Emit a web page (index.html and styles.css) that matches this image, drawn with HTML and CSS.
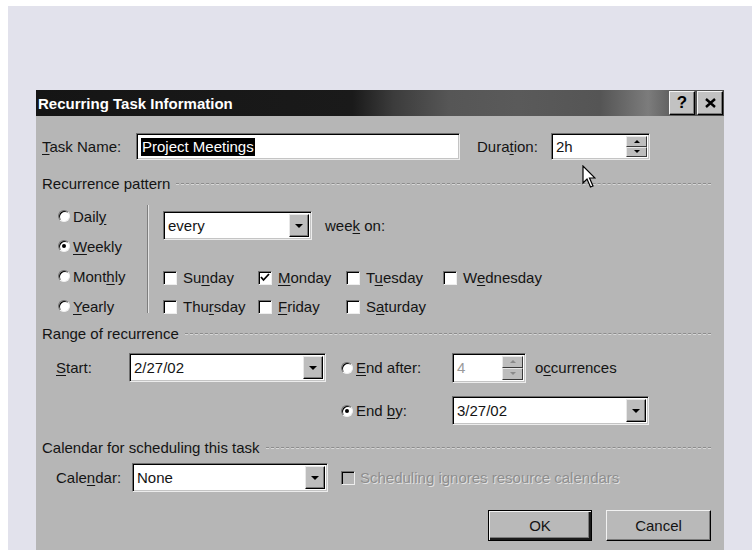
FILE: index.html
```html
<!DOCTYPE html>
<html>
<head>
<meta charset="utf-8">
<title>Recurring Task Information</title>
<link rel="stylesheet" href="styles.css">
</head>
<body>
<div class="desk">
  <div class="dialog">
    <div class="titlebar">
      <span class="title">Recurring Task Information</span>
      <div class="tbtns">
        <span class="tbtn">?</span>
        <span class="tbtn tbtn-x">
          <svg width="11" height="10" viewBox="0 0 11 10"><path d="M1 1 L10 9 M10 1 L1 9" stroke="#000" stroke-width="2.4"/></svg>
        </span>
      </div>
    </div>

    <div class="dbody">
      <!-- task name / duration -->
      <div class="row row-task">
        <span class="lbl lbl-task"><u>T</u>ask Name:</span>
        <div class="field f-task"><span class="txt"><span class="sel">Project Meetings</span></span></div>
        <span class="lbl lbl-dur">Dura<u>t</u>ion:</span>
        <div class="field f-dur">
          <span class="txt">2h</span>
          <span class="spin"><span class="sp sp-up"><i></i></span><span class="sp sp-dn"><i></i></span></span>
        </div>
      </div>

      <!-- recurrence pattern -->
      <div class="grp grp-1"><span>Recurrence pattern</span></div>
      <div class="pattern">
        <div class="radios">
          <div class="radio"><span class="rb"></span><span>Dail<u>y</u></span></div>
          <div class="radio"><span class="rb on"></span><span><u>W</u>eekly</span></div>
          <div class="radio"><span class="rb"></span><span>Mont<u>h</u>ly</span></div>
          <div class="radio"><span class="rb"></span><span><u>Y</u>early</span></div>
        </div>
        <div class="vsep"></div>
        <div class="pright">
          <div class="every-row">
            <div class="field f-every">
              <span class="txt">every</span>
              <span class="ddbtn"><i></i></span>
            </div>
            <span class="weekon">wee<u>k</u> on:</span>
          </div>
          <div class="days">
            <div class="cb-item"><span class="cb"></span><span>Su<u>n</u>day</span></div>
            <div class="cb-item"><span class="cb checked"><svg width="10" height="9" viewBox="0 0 10 9"><path d="M1 4 L3.5 7 L9 1" fill="none" stroke="#000" stroke-width="1.8"/></svg></span><span><u>M</u>onday</span></div>
            <div class="cb-item"><span class="cb"></span><span>T<u>u</u>esday</span></div>
            <div class="cb-item"><span class="cb"></span><span>W<u>e</u>dnesday</span></div>
            <div class="cb-item"><span class="cb"></span><span>Thu<u>r</u>sday</span></div>
            <div class="cb-item"><span class="cb"></span><span><u>F</u>riday</span></div>
            <div class="cb-item"><span class="cb"></span><span>S<u>a</u>turday</span></div>
          </div>
        </div>
      </div>

      <!-- range of recurrence -->
      <div class="grp grp-2"><span>Range of recurrence</span></div>
      <div class="row range-1">
        <span class="lbl lbl-start"><u>S</u>tart:</span>
        <div class="field f-start">
          <span class="txt">2/27/02</span>
          <span class="ddbtn"><i></i></span>
        </div>
        <div class="radio ropt"><span class="rb"></span><span><u>E</u>nd after:</span></div>
        <div class="field f-occ">
          <span class="txt dim">4</span>
          <span class="spin off"><span class="sp sp-up"><i></i></span><span class="sp sp-dn"><i></i></span></span>
        </div>
        <span class="occ">o<u>c</u>currences</span>
      </div>
      <div class="row range-2">
        <div class="radio ropt"><span class="rb on"></span><span>End <u>b</u>y:</span></div>
        <div class="field f-endby">
          <span class="txt">3/27/02</span>
          <span class="ddbtn"><i></i></span>
        </div>
      </div>

      <!-- calendar -->
      <div class="grp grp-3"><span>Calendar for scheduling this task</span></div>
      <div class="row cal-row">
        <span class="lbl lbl-cal">Cale<u>n</u>dar:</span>
        <div class="field f-cal">
          <span class="txt">None</span>
          <span class="ddbtn"><i></i></span>
        </div>
        <div class="cb-item cb-off"><span class="cb"></span><span class="dis">Scheduling ignores resource calendars</span></div>
      </div>

      <div class="btns">
        <span class="btn btn-def">OK</span>
        <span class="btn">Cancel</span>
      </div>
    </div>

    <svg class="pointer" width="14" height="24" viewBox="0 0 14 24">
      <path d="M1 1 L1 18 L5 14 L8.5 22 L11 21 L7.5 13 L13 13 Z" fill="#fff" stroke="#000" stroke-width="1.2" stroke-linejoin="miter"/>
    </svg>
  </div>
</div>
</body>
</html>
```

FILE: styles.css
```css
* {
  box-sizing: border-box;
}

html,
body {
  margin: 0;
  padding: 0;
  background: #ffffff;
}

body {
  font-family: "Liberation Sans", Arial, sans-serif;
  font-size: 15px;
  color: #141414;
}

u {
  text-decoration: underline;
  text-underline-offset: 2px;
}

/* lavender backdrop */
.desk {
  margin: 6px 0 0 8px;
  height: 544px;
  background: #e2e2ec;
  padding: 84px 0 0 28px;
  overflow: hidden;
}

.dialog {
  position: relative;
  width: 688px;
  height: 470px;
  background: #b6b6b6;
}

/* title bar */
.titlebar {
  height: 26px;
  display: flex;
  align-items: center;
  justify-content: space-between;
  padding: 0 1px 0 1px;
  background: linear-gradient(90deg, #151515 0%, #1a1a1a 46%, #3c3c3c 52%, #565656 60%, #5a5a5a 70%, #555555 82%, #7c7c7c 89%, #5a5a5a 93%, #4a4a4a 100%);
}

.title {
  color: #ffffff;
  font-weight: bold;
  font-size: 15px;
  padding-left: 1px;
}

.tbtns {
  display: flex;
  gap: 2px;
}

.tbtn {
  width: 26px;
  height: 24px;
  background: #c2c2c2;
  border: 1px solid;
  border-color: #f4f4f4 #000000 #000000 #f4f4f4;
  box-shadow: inset -1px -1px #7c7c7c;
  display: flex;
  align-items: center;
  justify-content: center;
  font-weight: bold;
  font-size: 17px;
  color: #000000;
}

/* dialog body */
.dbody {
  padding: 17px 13px 0 6px;
}

.row {
  display: flex;
  align-items: center;
}

.lbl {
  flex: none;
}

/* sunken edit fields */
.field {
  display: flex;
  align-items: stretch;
  background: #ffffff;
  border: 1px solid;
  border-color: #6e6e6e #ececec #ececec #6e6e6e;
  box-shadow: inset 1px 1px #000000, inset -1px -1px #c4c4c4;
  padding: 2px;
  flex: none;
}

.field .txt {
  flex: 1;
  display: flex;
  align-items: center;
  padding-left: 2px;
  white-space: nowrap;
  overflow: hidden;
}

.sel {
  background: #000000;
  color: #ffffff;
  line-height: 18px;
  padding: 0 1px;
}

.dim {
  color: #9a9a9a;
}

/* drop-down button */
.ddbtn {
  width: 20px;
  flex: none;
  background: #bdbdbd;
  border: 1px solid;
  border-color: #e8e8e8 #000000 #000000 #e8e8e8;
  box-shadow: inset -1px -1px #7a7a7a;
  display: flex;
  align-items: center;
  justify-content: center;
}

.ddbtn i {
  width: 0;
  height: 0;
  border-left: 4px solid transparent;
  border-right: 4px solid transparent;
  border-top: 4px solid #000000;
}

/* spinner */
.spin {
  width: 21px;
  flex: none;
  display: flex;
  flex-direction: column;
}

.sp {
  flex: 1;
  background: #bdbdbd;
  border: 1px solid;
  border-color: #e8e8e8 #3a3a3a #3a3a3a #e8e8e8;
  display: flex;
  align-items: center;
  justify-content: center;
}

.sp i {
  width: 0;
  height: 0;
  border-left: 3px solid transparent;
  border-right: 3px solid transparent;
}

.sp-up i {
  border-bottom: 3px solid #000000;
}

.sp-dn i {
  border-top: 3px solid #000000;
}

.spin.off .sp-up i {
  border-bottom-color: #8a8a8a;
}

.spin.off .sp-dn i {
  border-top-color: #8a8a8a;
}

/* row 1 */
.row-task {
  height: 27px;
}

.lbl-task {
  width: 94px;
}

.f-task {
  width: 324px;
  height: 27px;
}

.lbl-dur {
  margin-left: 17px;
  width: 74px;
}

.f-dur {
  width: 99px;
  height: 27px;
}

/* group headings with etched line */
.grp {
  display: flex;
  align-items: center;
  height: 18px;
}

.grp::after {
  content: "";
  flex: 1;
  margin-left: 6px;
  margin-top: 2px;
  border-top: 1px dashed #8c8c8c;
  border-bottom: 1px dashed #d8d8d8;
}

.grp-1 {
  margin-top: 14px;
}

.grp-2 {
  margin-top: 3px;
}

.grp-3 {
  margin-top: 13px;
}

/* recurrence pattern */
.pattern {
  display: flex;
  padding-top: 9px;
}

.radios {
  width: 105px;
  padding-left: 16px;
}

.radio {
  display: flex;
  align-items: center;
  gap: 3px;
  height: 30px;
}

.rb {
  width: 12px;
  height: 12px;
  flex: none;
  border-radius: 50%;
  background: #ffffff;
  border: 1px solid;
  border-color: #707070 #f0f0f0 #f0f0f0 #707070;
  box-shadow: inset 1px 1px #000000;
  display: flex;
  align-items: center;
  justify-content: center;
}

.rb.on::after {
  content: "";
  width: 4px;
  height: 4px;
  border-radius: 50%;
  background: #000000;
}

.vsep {
  width: 2px;
  height: 108px;
  margin-top: 4px;
  border-left: 1px solid #7e7e7e;
  border-right: 1px solid #e4e4e4;
}

.pright {
  margin-left: 14px;
  padding-top: 10px;
}

.every-row {
  display: flex;
  align-items: center;
  height: 29px;
}

.f-every {
  width: 149px;
  height: 29px;
}

.weekon {
  margin-left: 13px;
}

.days {
  display: grid;
  grid-template-columns: 95px 88px 97px auto;
  grid-auto-rows: 29px;
  margin-top: 23px;
}

.cb-item {
  display: flex;
  align-items: center;
  gap: 6px;
  white-space: nowrap;
}

.cb {
  width: 14px;
  height: 14px;
  flex: none;
  background: #ffffff;
  border: 1px solid;
  border-color: #707070 #eeeeee #eeeeee #707070;
  box-shadow: inset 1px 1px #000000;
  display: flex;
  align-items: center;
  justify-content: center;
}

/* range of recurrence */
.range-1 {
  margin-top: 11px;
  height: 29px;
  padding-left: 14px;
}

.lbl-start {
  width: 73px;
}

.f-start {
  width: 197px;
  height: 29px;
}

.ropt {
  width: 111px;
  flex: none;
}

.range-1 .ropt {
  margin-left: 15px;
}

.f-occ {
  width: 74px;
  height: 30px;
}

.occ {
  margin-left: 9px;
}

.range-2 {
  margin-top: 14px;
  height: 29px;
  padding-left: 299px;
}

.f-endby {
  width: 197px;
  height: 29px;
}

/* calendar */
.cal-row {
  margin-top: 7px;
  height: 29px;
  padding-left: 14px;
}

.lbl-cal {
  width: 76px;
}

.f-cal {
  width: 196px;
  height: 29px;
}

.cb-off {
  margin-left: 13px;
  gap: 5px;
}

.cb-off .cb {
  background: #b6b6b6;
}

.dis {
  color: #8e8e8e;
  text-shadow: 1px 1px #e2e2e2;
}

/* buttons */
.btns {
  display: flex;
  justify-content: flex-end;
  gap: 14px;
  margin-top: 18px;
}

.btn {
  width: 105px;
  height: 31px;
  display: flex;
  align-items: center;
  justify-content: center;
  background: #b9b9b9;
  border: 1px solid;
  border-color: #f2f2f2 #000000 #000000 #f2f2f2;
  box-shadow: inset -1px -1px #7a7a7a;
}

.btn-def {
  width: 104px;
  border: 1px solid #000000;
  box-shadow: inset 1px 1px #f2f2f2, inset -2px -2px #1a1a1a, inset -3px -3px #7a7a7a;
}

/* mouse pointer hovering over the dialog */
.pointer {
  position: absolute;
  left: 546px;
  top: 75px;
}
```
